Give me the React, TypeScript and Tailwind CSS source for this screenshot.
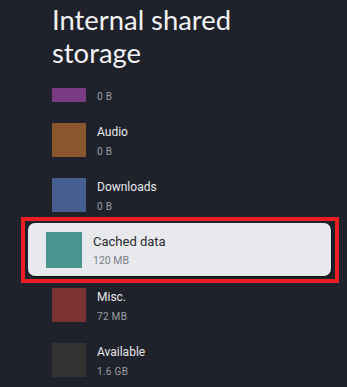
import React from "react";

type Item = { label?: string; size: string; color: string; focused?: boolean };

const items: Item[] = [
  { size: "0 B", color: "#7b3b84" },
  { label: "Audio", size: "0 B", color: "#8a572c" },
  { label: "Downloads", size: "0 B", color: "#465e90" },
  { label: "Cached data", size: "120 MB", color: "#4a958f", focused: true },
  { label: "Misc.", size: "72 MB", color: "#7a3233" },
  { label: "Available", size: "1.6 GB", color: "#333333" },
];

function Row({ item }: { item: Item }) {
  if (item.focused) {
    return (
      <div className="relative -ml-[24px] -mt-[10px] -mb-[9px] w-[303px]">
        <div className="absolute -left-[7px] -right-[8px] -top-[6px] -bottom-[7px] border-4 border-[#ea1c24]" />
        <div className="relative flex h-[53px] items-start gap-[11px] rounded-[7px] bg-[#e8e9ed] pl-[18px] pt-[9px] shadow-[1px_1px_1px_rgba(0,0,0,0.6)]">
          <div className="h-[36px] w-[36px] shrink-0" style={{ background: item.color }} />
          <div className="flex flex-col">
            <div className="mt-[1px] text-[13px] leading-[17px] text-[#2a2b2f]">{item.label}</div>
            <div className="mt-[5px] text-[10.5px] leading-[12px] text-[#7d7f85]">{item.size}</div>
          </div>
        </div>
      </div>
    );
  }
  return (
    <div className="flex h-[34px] items-start gap-[11px]">
      <div className="h-[34px] w-[34px] shrink-0" style={{ background: item.color }} />
      <div className="flex flex-col">
        {item.label ? (
          <div className="mt-[1px] text-[12px] leading-[16px] text-[#e6e7ea]">{item.label}</div>
        ) : (
          <div className="mt-[1px] h-[16px]" />
        )}
        <div className="mt-[6px] text-[10px] leading-[12px] tracking-[0.3px] text-[#9a9da4]">{item.size}</div>
      </div>
    </div>
  );
}

export default function App() {
  return (
    <div
      className="h-[387px] w-[347px] overflow-hidden bg-[#1f222a]"
      style={{ fontFamily: "Roboto, 'Noto Sans', sans-serif" }}
    >
      <div className="relative z-10 h-[88px] bg-[#1f222a] pl-[52px] pt-[3px]">
        <h1
          className="text-[27.4px] leading-[33px] font-normal text-[#f1f1f3]"
          style={{ fontFamily: "Lato, Roboto, sans-serif" }}
        >
          Internal shared
          <br />
          storage
        </h1>
      </div>
      <div className="pl-[52px]">
        <div className="-mt-[20px] flex flex-col gap-[21px]">
          {items.map((it, i) => (
            <Row key={i} item={it} />
          ))}
        </div>
      </div>
    </div>
  );
}
